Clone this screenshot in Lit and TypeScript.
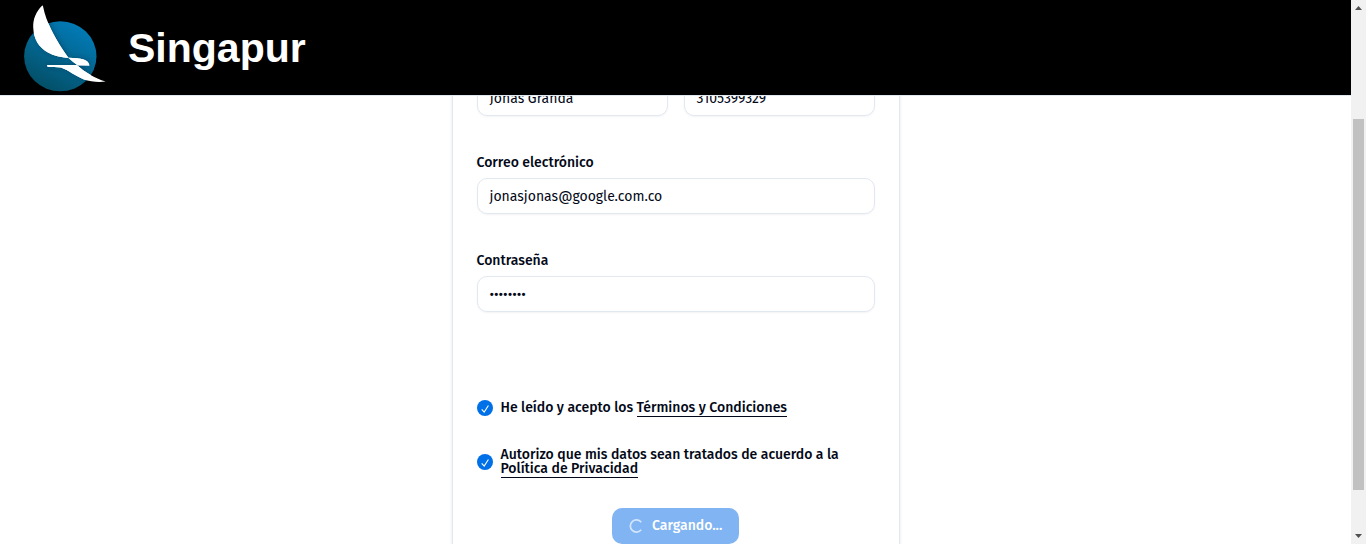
import { LitElement, html, css, svg } from "lit";
import { customElement, property } from "lit/decorators.js";

@customElement("brand-logo")
class BrandLogo extends LitElement {
  static styles = css`
    :host { display: block; width: 96px; height: 95px; }
    svg { display: block; }
  `;
  render() {
    return html`<svg width="96" height="95" viewBox="0 0 96 95">
      <defs>
        <linearGradient id="sea" x1="0.8" y1="0.1" x2="0.3" y2="1">
          <stop offset="0" stop-color="#027ab5" />
          <stop offset="0.5" stop-color="#03658f" />
          <stop offset="1" stop-color="#034e65" />
        </linearGradient>
        <filter id="shade" x="-20%" y="-20%" width="140%" height="140%">
          <feDropShadow dx="1" dy="0" stdDeviation="2.5" flood-color="#002f47" flood-opacity="0.55" />
        </filter>
        <clipPath id="disc"><ellipse cx="44.3" cy="56.3" rx="36.2" ry="35" /></clipPath>
      </defs>
      <ellipse cx="44.3" cy="56.3" rx="36.2" ry="35" fill="url(#sea)" />
      <g clip-path="url(#disc)"><g filter="url(#shade)">${this.bird()}</g></g>
      ${this.bird()}
    </svg>`;
  }
  bird() {
    return svg`<path fill="#fff" d="M26 5.8C20 12 17 19 17.2 27C17.5 39 23 47.5 32 52.5C38 56 45 57.2 52.5 58C39.5 40 30 22 27 6.3C26.8 5.5 26.5 5.4 26 5.8Z"/>
      <path fill="#fff" d="M52.3 57.7C58 58 64 58.3 67.5 59.4C71 60.5 72.9 62.6 73.4 65.4L61.6 65.2C58 62.5 55 60.2 52.3 57.7Z"/>
      <path fill="#fff" d="M31.2 65H60.8C69 72.5 78.5 78 89.7 81.6C82 82.4 74.5 81.8 67.5 79.2C59 76 53 70.5 45 67.6C41 66.7 37 67 33 67.1C31.8 67 31 66.3 31.2 65Z"/>`;
  }
}

@customElement("form-field")
class FormField extends LitElement {
  @property() label = "";
  @property() value = "";
  static styles = css`
    :host { display: flex; flex-direction: column; gap: 7px; min-width: 0; }
    .label { height: 16px; line-height: 16px; font-weight: 500; margin-top: -7px; white-space: nowrap; }
    .input { box-sizing: border-box; height: 36px; padding: 1px 12px 0; border: 1px solid #e2e8f0; border-radius: 10px; line-height: 34px; box-shadow: 0 1px 2px rgba(0, 0, 0, 0.05); white-space: nowrap; }
  `;
  render() {
    return html`${this.label ? html`<div class="label">${this.label}</div>` : null}
      <div class="input">${this.value}</div>`;
  }
}

@customElement("check-mark")
class CheckMark extends LitElement {
  static styles = css`:host { display: block; width: 16px; height: 16px; flex: none; } svg { display: block; }`;
  render() {
    return html`<svg width="16" height="16" viewBox="0 0 16 16">
      <circle cx="8" cy="8" r="8" fill="#0070e8" />
      <path d="M4.7 9.3L7.2 12L11.4 5.5" fill="none" stroke="#fff" stroke-width="1.1" />
    </svg>`;
  }
}

@customElement("app-root")
class AppRoot extends LitElement {
  static styles = css`
    :host { display: flex; width: 100%; height: 544px; overflow: hidden; background: #fff; color: #020817; font: 400 14px/14px "Fira Sans", "Open Sans", sans-serif; }
    .page { flex: 1; min-width: 0; display: flex; flex-direction: column; }
    .header { flex: none; display: flex; align-items: center; gap: 16px; height: 95px; padding-left: 16px; background: #000; border-bottom: 1px solid #e2e8f0; }
    .title { margin: 0; color: #fff; font: 700 41px/48px "Liberation Sans", sans-serif; }
    .main { flex: 1; min-height: 0; overflow: hidden; display: flex; justify-content: center; align-items: flex-start; }
    .card { box-sizing: border-box; flex: none; width: 448px; height: 480px; margin-top: -16px; padding: 0 24px; border: solid #e2e8f0; border-width: 0 1px; box-shadow: 0 1px 3px rgba(0, 0, 0, 0.1); display: flex; flex-direction: column; }
    .pair { display: grid; grid-template-columns: 1fr 1fr; gap: 16px; }
    .mail, .pass { margin-top: 46px; }
    .consent { display: flex; align-items: center; gap: 8px; height: 28px; font-weight: 500; white-space: nowrap; }
    .terms { margin-top: 82px; }
    .privacy { margin-top: 26px; }
    .link { display: inline-block; border-bottom: 1px solid #020817; height: 15px; }
    .row-text { padding-top: 1px; }
    .button { align-self: center; box-sizing: border-box; display: flex; align-items: center; gap: 8px; flex: none; width: 127px; height: 36px; margin-top: 32px; padding-left: 16px; border-radius: 10px; background: #80b4f2; color: #fff; font-weight: 500; }
    .scrollbar { flex: none; width: 15px; height: 544px; background: #f1f1f1; display: flex; flex-direction: column; align-items: center; }
    .thumb { width: 11px; height: 371px; background: #c1c1c1; }
    .arrow { display: block; flex: none; width: 15px; height: 15px; }
    .space-top { flex: none; height: 104px; }
    .space-end { flex: 1; }
  `;
  render() {
    return html`
      <div class="page">
        <header class="header"><brand-logo></brand-logo><h1 class="title">Singapur</h1></header>
        <main class="main">
          <div class="card">
            <div class="pair">
              <form-field value="Jonas Granda"></form-field>
              <form-field value="3105399329"></form-field>
            </div>
            <form-field class="mail" label="Correo electrónico" value="jonasjonas@google.com.co"></form-field>
            <form-field class="pass" label="Contraseña" value="••••••••"></form-field>
            <div class="consent terms"><check-mark></check-mark><div class="row-text">He leído y acepto los <span class="link">Términos y Condiciones</span></div></div>
            <div class="consent privacy"><check-mark></check-mark><div class="row-text">Autorizo que mis datos sean tratados de acuerdo a la<br /><span class="link">Política de Privacidad</span></div></div>
            <div class="button">
              <svg width="16" height="16" viewBox="0 0 16 16" fill="none" stroke="#d4e6fc" stroke-width="1.7"><path d="M13.2 11.8a6.1 6.1 0 1 1 0-7.6" /></svg>
              <span>Cargando...</span>
            </div>
          </div>
        </main>
      </div>
      <div class="scrollbar">
        <svg class="arrow" viewBox="0 0 15 15"><path d="M4 10L7.5 6L11 10Z" fill="#505050" /></svg>
        <div class="space-top"></div><div class="thumb"></div><div class="space-end"></div>
        <svg class="arrow" viewBox="0 0 15 15"><path d="M4 5L7.5 9L11 5Z" fill="#505050" /></svg>
      </div>`;
  }
}
